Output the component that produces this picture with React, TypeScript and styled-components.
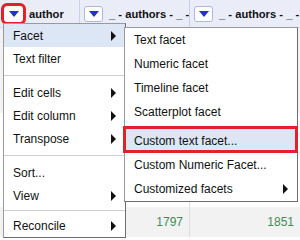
import React from "react";
import styled, { createGlobalStyle } from "styled-components";

const Global = createGlobalStyle`
  html, body { margin: 0; padding: 0; background: #ffffff; overflow: hidden; }
  body { font-family: "Liberation Sans", Arial, sans-serif; font-size: 12px; color: #111; }
  #root { width: 300px; height: 240px; position: relative; overflow: hidden; }
`;

const Page = styled.div`
  width: 300px;
  height: 240px;
  position: relative;
  overflow: hidden;
  background: #fff;
`;

const Header = styled.div`
  display: flex;
  height: 28px;
  background: #eaedf8;
  border-bottom: 1px solid #d5daec;
  box-sizing: border-box;
`;

const HeadCell = styled.div<{ $w: number }>`
  flex: 0 0 ${(p) => p.$w}px;
  display: flex;
  align-items: center;
  gap: 6px;
  padding: 0 4px;
  box-sizing: border-box;
  border-right: 1px solid #c9d0ea;
  font-weight: bold;
  font-size: 11.2px;
  color: #111;
  white-space: nowrap;
  overflow: hidden;
`;

const DropButton = styled.div<{ $marked?: boolean }>`
  flex: 0 0 auto;
  width: 19px;
  height: 16px;
  box-sizing: border-box;
  background: #fff;
  border: 1px solid ${(p) => (p.$marked ? "#fff" : "#aab6e6")};
  border-radius: 3px;
  display: flex;
  align-items: center;
  justify-content: center;
  outline: ${(p) => (p.$marked ? "3px solid #e4202b" : "none")};
  outline-offset: 0px;
  &::after {
    content: "";
    width: 0;
    height: 0;
    border-left: 5px solid transparent;
    border-right: 5px solid transparent;
    border-top: 6px solid #2130cf;
    margin-top: 1px;
  }
`;

const Body = styled.div`
  display: flex;
  flex-direction: column;
`;

const Row = styled.div<{ $h: number; $odd?: boolean }>`
  display: flex;
  height: ${(p) => p.$h}px;
  background: ${(p) => (p.$odd ? "#f2f2f2" : "#fff")};
`;

const Cell = styled.div<{ $w: number }>`
  flex: 0 0 ${(p) => p.$w}px;
  box-sizing: border-box;
  border-right: 1px solid #dcdcdc;
  display: flex;
  align-items: center;
  justify-content: flex-end;
  padding: 0 6px;
`;

const Num = styled.span`
  color: #3f8d57;
  font-size: 12px;
`;

const Menu = styled.div<{ $x: number; $y: number; $w: number }>`
  position: absolute;
  left: ${(p) => p.$x}px;
  top: ${(p) => p.$y}px;
  width: ${(p) => p.$w}px;
  background: #fff;
  border: 1px solid #9a9a9a;
  border-right-color: #6e6e6e;
  border-bottom-color: #6e6e6e;
  box-sizing: border-box;
  display: flex;
  flex-direction: column;
  padding: 0;
`;

const Item = styled.div<{ $active?: boolean; $marked?: boolean; $h?: number }>`
  position: relative;
  height: ${(p) => p.$h ?? 23}px;
  display: flex;
  align-items: center;
  justify-content: space-between;
  padding: 0 9px 0 9px;
  background: ${(p) => (p.$active ? "#dce6f5" : "transparent")};
  color: #111;
  font-size: 12px;
  white-space: nowrap;
  ${(p) =>
    p.$marked &&
    `
    &::before {
      content: "";
      position: absolute;
      left: -2px; right: -1px; top: -3px; bottom: 0px;
      border: 3px solid #e4202b;
      pointer-events: none;
    }
  `}
`;

const Arrow = styled.span`
  width: 0;
  height: 0;
  border-top: 5px solid transparent;
  border-bottom: 5px solid transparent;
  border-left: 5px solid #111;
`;

const Sep = styled.div<{ $m?: number }>`
  height: 1px;
  background: #cfcfcf;
  margin: ${(p) => p.$m ?? 5}px 0;
`;

export default function App() {
  return (
    <Page>
      <Global />
      <Header>
        <HeadCell $w={80}>
          <DropButton $marked />
          <span>author</span>
        </HeadCell>
        <HeadCell $w={110}>
          <DropButton />
          <span>_ - authors - _ - b</span>
        </HeadCell>
        <HeadCell $w={111}>
          <DropButton />
          <span>_ - authors - _ - c</span>
        </HeadCell>
      </Header>
      <Body>
        <Row $h={85} $odd>
          <Cell $w={80} />
          <Cell $w={110} />
          <Cell $w={111} />
        </Row>
        <Row $h={94}>
          <Cell $w={80} />
          <Cell $w={110} />
          <Cell $w={111} />
        </Row>
        <Row $h={30} $odd>
          <Cell $w={80} />
          <Cell $w={110}>
            <Num>1797</Num>
          </Cell>
          <Cell $w={111}>
            <Num>1851</Num>
          </Cell>
        </Row>
      </Body>

      <Menu $x={3} $y={23} $w={123}>
        <Item $active>
          Facet <Arrow />
        </Item>
        <Item>Text filter</Item>
        <Sep />
        <Item>
          Edit cells <Arrow />
        </Item>
        <Item>
          Edit column <Arrow />
        </Item>
        <Item>
          Transpose <Arrow />
        </Item>
        <Sep />
        <Item>Sort...</Item>
        <Item>
          View <Arrow />
        </Item>
        <Sep $m={3} />
        <Item>
          Reconcile <Arrow />
        </Item>
      </Menu>

      <Menu $x={124} $y={27} $w={174}>
        <Item $h={24}>Text facet</Item>
        <Item $h={24}>Numeric facet</Item>
        <Item $h={24}>Timeline facet</Item>
        <Item $h={24}>Scatterplot facet</Item>
        <Sep $m={2} />
        <Item $h={24} $active $marked>
          Custom text facet...
        </Item>
        <Item $h={24}>Custom Numeric Facet...</Item>
        <Item $h={24}>
          Customized facets <Arrow />
        </Item>
      </Menu>
    </Page>
  );
}
